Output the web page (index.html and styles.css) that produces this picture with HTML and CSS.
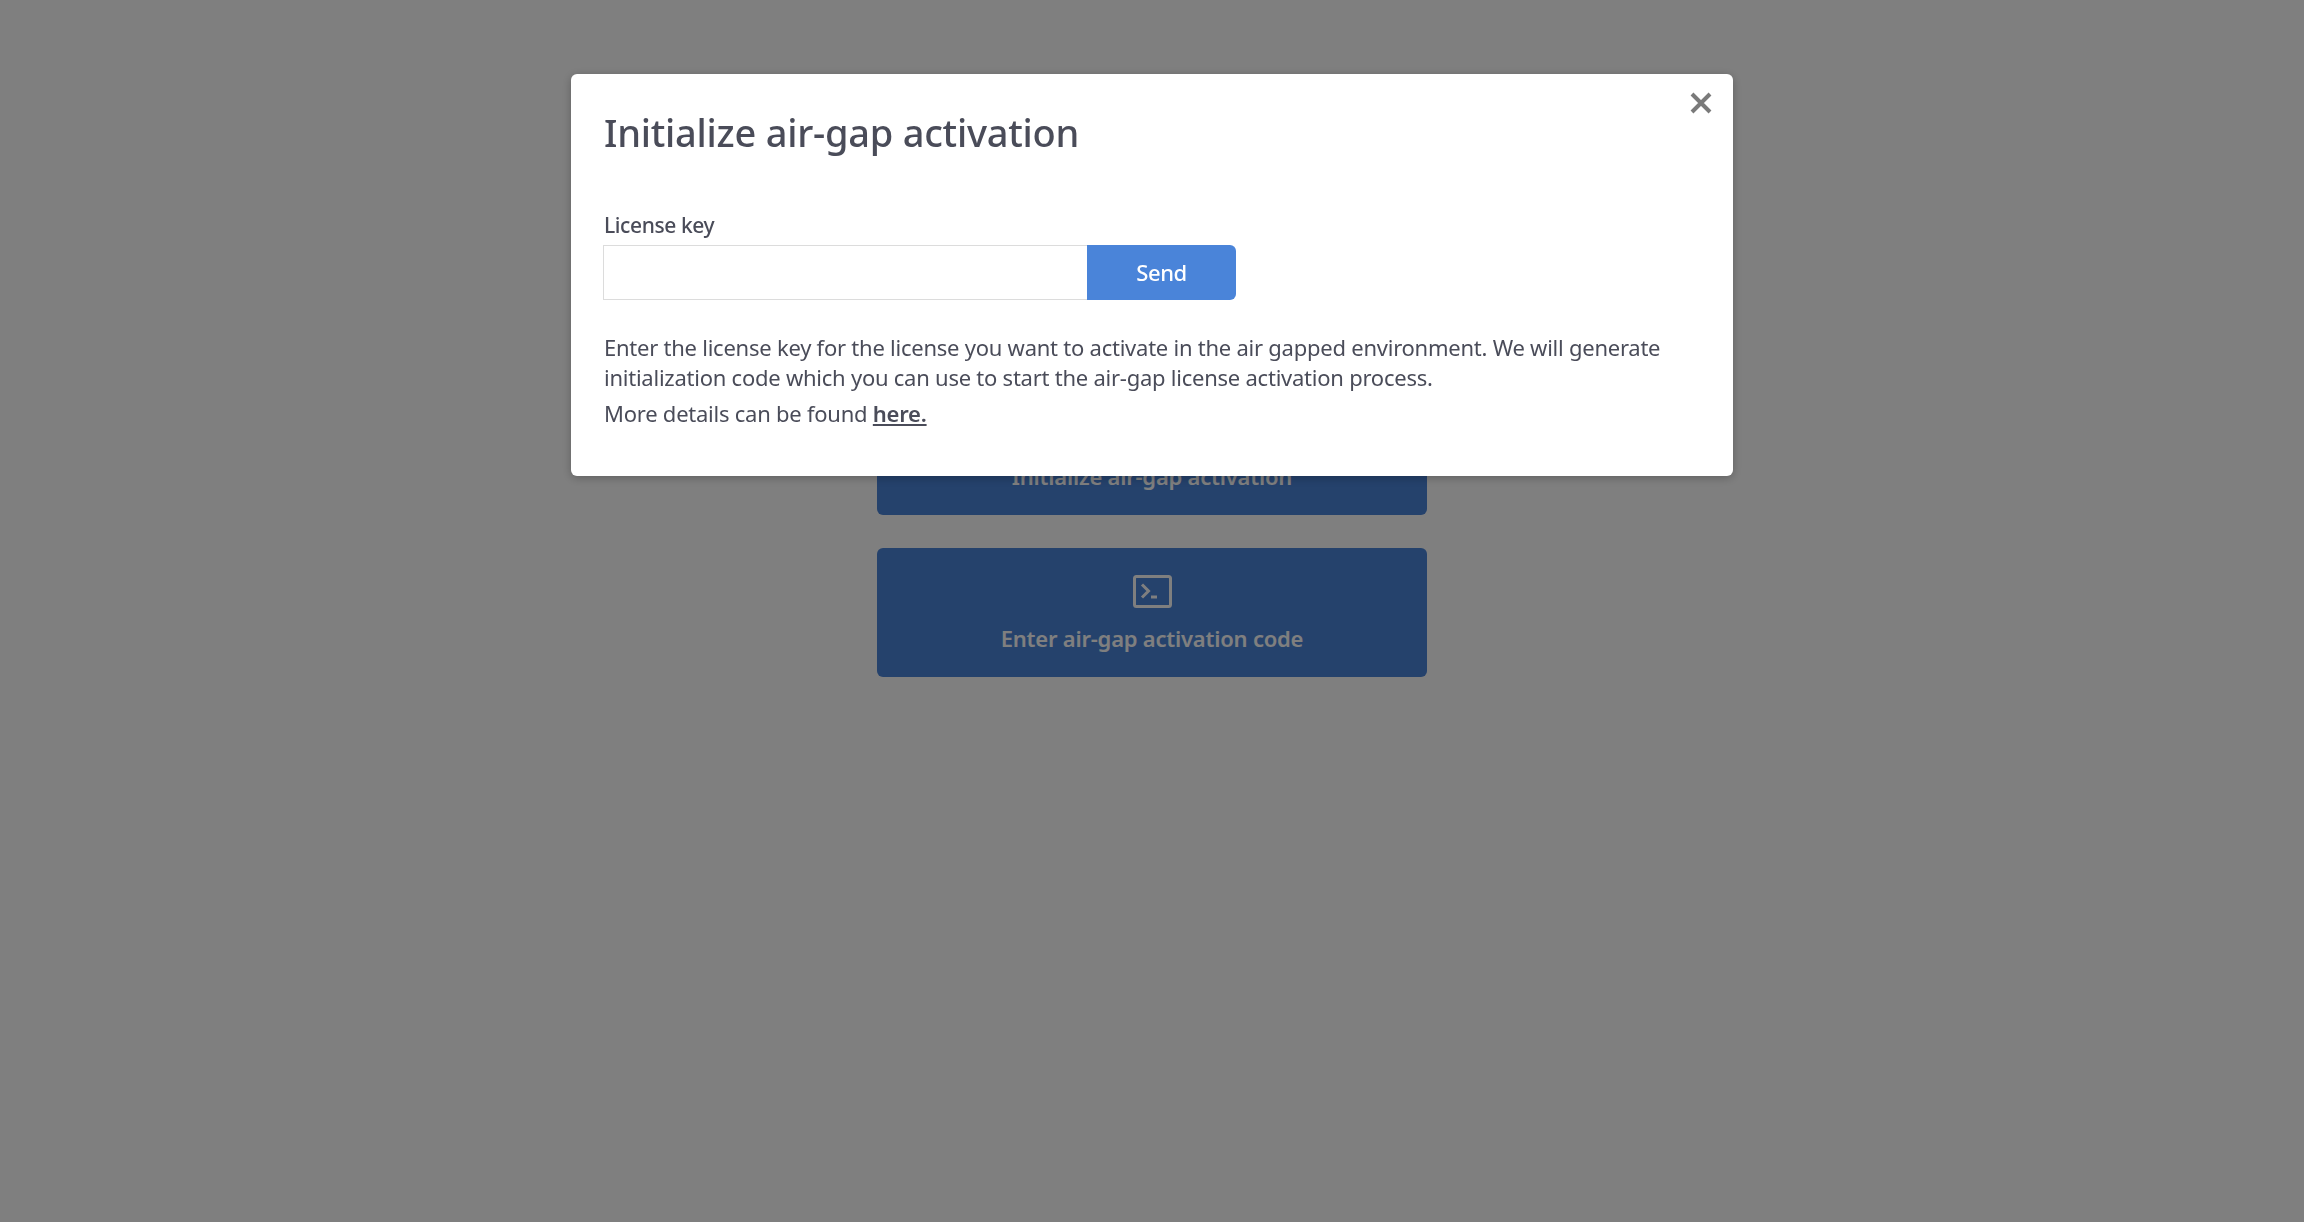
FILE: index.html
```html
<!DOCTYPE html>
<html lang="en">

<head>
    <meta charset="UTF-8">
    <meta name="viewport" content="width=device-width, initial-scale=1.0">
    <title>Air-gap activation</title>
    <link rel="stylesheet" href="styles.css">
</head>

<body>

    <div class="actions">
        <button class="action_btn" type="button">
            <span class="action_label">Initialize air-gap activation</span>
        </button>
        <button class="action_btn" type="button">
            <svg class="action_icon" viewBox="0 0 39 33" width="39" height="33" fill="none" stroke="currentColor">
                <rect x="1.5" y="1.5" width="36" height="30" rx="2" stroke-width="3" />
                <path d="M9 9.5l6.5 6.5-6.5 6.5" stroke-width="3" />
                <path d="M18 22h6" stroke-width="3" />
            </svg>
            <span class="action_label">Enter air-gap activation code</span>
        </button>
    </div>

    <div class="overlay">
        <div class="modal">
            <button class="modal_close" type="button" aria-label="Close">
                <svg viewBox="0 0 22 22" width="22" height="22" stroke="currentColor" stroke-width="4">
                    <path d="M2 2l18 18M20 2L2 20" />
                </svg>
            </button>
            <h2 class="modal_title">Initialize air-gap activation</h2>
            <form class="key_form">
                <label for="licenseKey" class="form_label">License key</label>
                <div class="key_row">
                    <input type="text" id="licenseKey" class="key_input">
                    <button type="button" class="send_btn">Send</button>
                </div>
            </form>
            <p class="modal_text">Enter the license key for the license you want to activate in the air gapped environment. We will generate initialization code which you can use to start the air-gap license activation process.</p>
            <p class="modal_text modal_more">More details can be found <a href="#" class="modal_link">here.</a></p>
        </div>
    </div>

</body>

</html>
```

FILE: styles.css
```css
body {
    font-family: "Noto Sans", Arial, sans-serif;
    margin: 0;
    height: 100vh;
    background-color: #fff;
    color: #4a4c59;
    overflow: hidden;
}

.actions {
    display: flex;
    flex-direction: column;
    align-items: center;
    gap: 33px;
    padding-top: 386px;
}

.action_btn {
    width: 550px;
    height: 129px;
    display: flex;
    flex-direction: column;
    align-items: center;
    justify-content: flex-end;
    padding: 0 0 24px;
    border: 0;
    border-radius: 6px;
    background-color: #4a84d9;
    color: #fff;
    font-family: inherit;
}

.action_icon {
    margin-bottom: 15px;
}

.action_label {
    font-size: 22px;
    font-weight: 600;
    line-height: 30px;
    letter-spacing: -0.22px;
}

.overlay {
    position: fixed;
    top: 0;
    left: 0;
    width: 100%;
    height: 100%;
    display: flex;
    justify-content: center;
    align-items: flex-start;
    padding-top: 74px;
    box-sizing: border-box;
    background-color: rgba(0, 0, 0, 0.5);
}

.modal {
    position: relative;
    width: 1162px;
    height: 402px;
    box-sizing: border-box;
    padding: 30px 32px 0 33px;
    border-radius: 6px;
    background-color: #fff;
    box-shadow: 0 2px 10px rgba(0, 0, 0, 0.25);
}

.modal_close {
    position: absolute;
    top: 18px;
    right: 21px;
    padding: 0;
    border: 0;
    background: none;
    color: #7a7a7a;
    display: flex;
}

.modal_title {
    margin: 0;
    font-size: 38px;
    font-weight: 500;
    line-height: 56px;
    letter-spacing: -0.25px;
}

.key_form {
    margin-top: 50px;
}

.form_label {
    display: block;
    font-size: 21px;
    font-weight: 500;
    line-height: 30px;
    letter-spacing: -0.4px;
    margin-bottom: 5px;
}

.key_row {
    display: flex;
    margin-left: -1px;
}

.key_input {
    width: 484px;
    height: 55px;
    box-sizing: border-box;
    border: 1px solid #dcdcdc;
    border-right: 0;
    background-color: #fff;
}

.send_btn {
    width: 149px;
    height: 55px;
    padding: 0 0 2px;
    border: 0;
    border-radius: 0 6px 6px 0;
    background-color: #4a84d9;
    color: #fff;
    font-family: inherit;
    font-size: 22px;
    font-weight: 500;
    letter-spacing: -0.4px;
}

.modal_text {
    margin: 32px 0 0;
    font-size: 22px;
    line-height: 30px;
    letter-spacing: -0.24px;
}

.modal_more {
    margin-top: 6px;
}

.modal_link {
    color: #4a4c59;
    font-weight: 600;
}
```
